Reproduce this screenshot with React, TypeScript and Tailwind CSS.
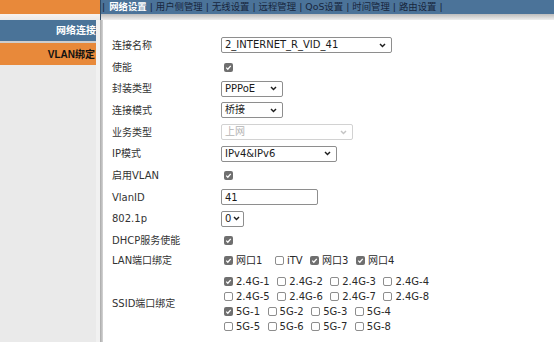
import type { ReactNode } from 'react'

const tabs = ['网络设置', '用户侧管理', '无线设置', '远程管理', 'QoS设置', '时间管理', '路由设置']

function Box({ checked = false }: { checked?: boolean }) {
  if (checked) {
    return (
      <span className="inline-flex h-[9px] w-[9px] shrink-0 items-center justify-center rounded-[2px] bg-[#6f6f6f]">
        <svg viewBox="0 0 10 10" className="h-[7px] w-[7px]">
          <path d="M1.8 5.2 L4 7.4 L8.2 2.6" fill="none" stroke="#fff" strokeWidth="1.9" />
        </svg>
      </span>
    )
  }
  return <span className="inline-block h-[9px] w-[9px] shrink-0 rounded-[2px] border border-[#8d8d8d] bg-white" />
}

function Chevron({ disabled = false }: { disabled?: boolean }) {
  return (
    <svg viewBox="0 0 8 6" className="h-[5px] w-[7px] shrink-0">
      <path d="M1 1.2 L4 4.3 L7 1.2" fill="none" stroke={disabled ? '#c4c4c4' : '#1e1e1e'} strokeWidth="1.7" />
    </svg>
  )
}

function Select({ value, width, disabled = false }: { value: string; width: string; disabled?: boolean }) {
  return (
    <div
      className={`flex h-[16px] items-center justify-between rounded-[2px] border pl-[3px] pr-[5px] ${width} ${
        disabled ? 'border-[#d2d2d2] text-[#b4b4b4]' : 'border-[#8e8e8e] text-[#1a1a1a]'
      }`}
    >
      <span className="leading-none">{value}</span>
      <Chevron disabled={disabled} />
    </div>
  )
}

function Row({ label, children }: { label: string; children?: ReactNode }) {
  return (
    <div className="flex h-[21.7px] items-center">
      <div className="w-[109px] shrink-0 text-[#333]">{label}</div>
      <div className="flex items-center">{children}</div>
    </div>
  )
}

function Item({ label, checked = false, extra = '' }: { label: string; checked?: boolean; extra?: string }) {
  return (
    <span className={`flex items-center ${extra}`}>
      <Box checked={checked} />
      <span className="ml-[3px] text-[#2a2a2a]">{label}</span>
    </span>
  )
}

const ssid = [
  ['2.4G-1', '2.4G-2', '2.4G-3', '2.4G-4'],
  ['2.4G-5', '2.4G-6', '2.4G-7', '2.4G-8'],
  ['5G-1', '5G-2', '5G-3', '5G-4'],
  ['5G-5', '5G-6', '5G-7', '5G-8'],
]

export default function App() {
  return (
    <div className="flex h-[342px] w-[554px] flex-col overflow-hidden bg-white font-['DejaVu_Sans','Noto_Sans_CJK_SC',sans-serif] text-[10px]">
      {/* Top bar */}
      <div className="flex h-[20px] shrink-0">
        <div className="flex w-[100px] flex-col">
          <div className="h-[14px] bg-[#e8893a]" />
          <div className="h-[6px] bg-linear-to-b from-[#f9f3ee] to-[#e9e9e9]" />
        </div>
        <div className="flex flex-1 flex-col border-l border-[#2e4a66]">
          <div className="flex h-[14px] items-center bg-[#4b7399] pl-[1px] text-[9.4px] leading-none text-[#17263d]">
            <span>|</span>
            {tabs.map((t, i) => (
              <span key={t} className="flex items-center">
                <span className={i === 0 ? 'ml-[4px] font-bold text-white' : 'ml-[3px]'}>{t}</span>
                <span className="ml-[3px]">|</span>
              </span>
            ))}
          </div>
          <div className="h-[6px] bg-linear-to-b from-[#bdbdbd] to-[#efefef]" />
        </div>
      </div>

      <div className="flex flex-1">
        {/* Sidebar */}
        <div className="flex w-[96px] shrink-0 flex-col bg-[#eaeaea] font-['Liberation_Sans','Noto_Sans_CJK_SC',sans-serif] font-bold">
          <div className="flex h-[21px] items-center justify-end bg-[#4a7398] text-white">
            <span className="whitespace-nowrap">网络连接</span>
          </div>
          <div className="h-[2px] bg-[#cdcdcd]" />
          <div className="flex h-[22px] items-center justify-end bg-[#e8893a] pr-[1px] text-[#111]">
            VLAN绑定
          </div>
        </div>
        <div className="w-[4px] bg-[#f1f1f1]" />
        <div className="w-[3px] bg-linear-to-r from-[#a9a9a9] to-[#d6d6d6]" />

        {/* Content */}
        <div className="flex-1 pl-[9px] pt-[14.5px]">
          <Row label="连接名称">
            <Select value="2_INTERNET_R_VID_41" width="w-[171px]" />
          </Row>
          <Row label="使能">
            <span className="ml-[3px]"><Box checked /></span>
          </Row>
          <Row label="封装类型">
            <Select value="PPPoE" width="w-[62px]" />
          </Row>
          <Row label="连接模式">
            <Select value="桥接" width="w-[62px]" />
          </Row>
          <Row label="业务类型">
            <Select value="上网" width="w-[132px]" disabled />
          </Row>
          <Row label="IP模式">
            <Select value="IPv4&IPv6" width="w-[116px]" />
          </Row>
          <Row label="启用VLAN">
            <span className="ml-[3px]"><Box checked /></span>
          </Row>
          <Row label="VlanID">
            <div className="flex h-[16px] w-[97px] items-center rounded-[2px] border border-[#8e8e8e] pl-[3px] text-[#1a1a1a]">
              41
            </div>
          </Row>
          <Row label="802.1p">
            <div className="flex h-[16px] w-[23px] items-center justify-between rounded-[2px] border border-[#8e8e8e] pl-[3px] pr-[3px] text-[#1a1a1a]">
              <span className="leading-none">0</span>
              <Chevron />
            </div>
          </Row>
          <Row label="DHCP服务使能">
            <span className="ml-[3px]"><Box checked /></span>
          </Row>

          <div className="flex h-[18px] items-center">
            <div className="w-[109px] shrink-0 text-[#333]">LAN端口绑定</div>
            <div className="ml-[3px] flex items-center gap-x-[7.5px]">
              <Item label="网口1" checked extra="mr-[5px]" />
              <Item label="iTV" />
              <Item label="网口3" checked />
              <Item label="网口4" checked />
            </div>
          </div>

          <div className="mt-[4px] flex items-center">
            <div className="w-[109px] shrink-0 text-[#333]">SSID端口绑定</div>
            <div className="ml-[3px] flex flex-col">
              {ssid.map((line, r) => (
                <div key={r} className="flex h-[15.3px] items-center gap-x-[7.5px]">
                  {line.map((s) => (
                    <Item key={s} label={s} checked={s === '2.4G-1' || s === '5G-1'} />
                  ))}
                </div>
              ))}
            </div>
          </div>
        </div>
      </div>
    </div>
  )
}
